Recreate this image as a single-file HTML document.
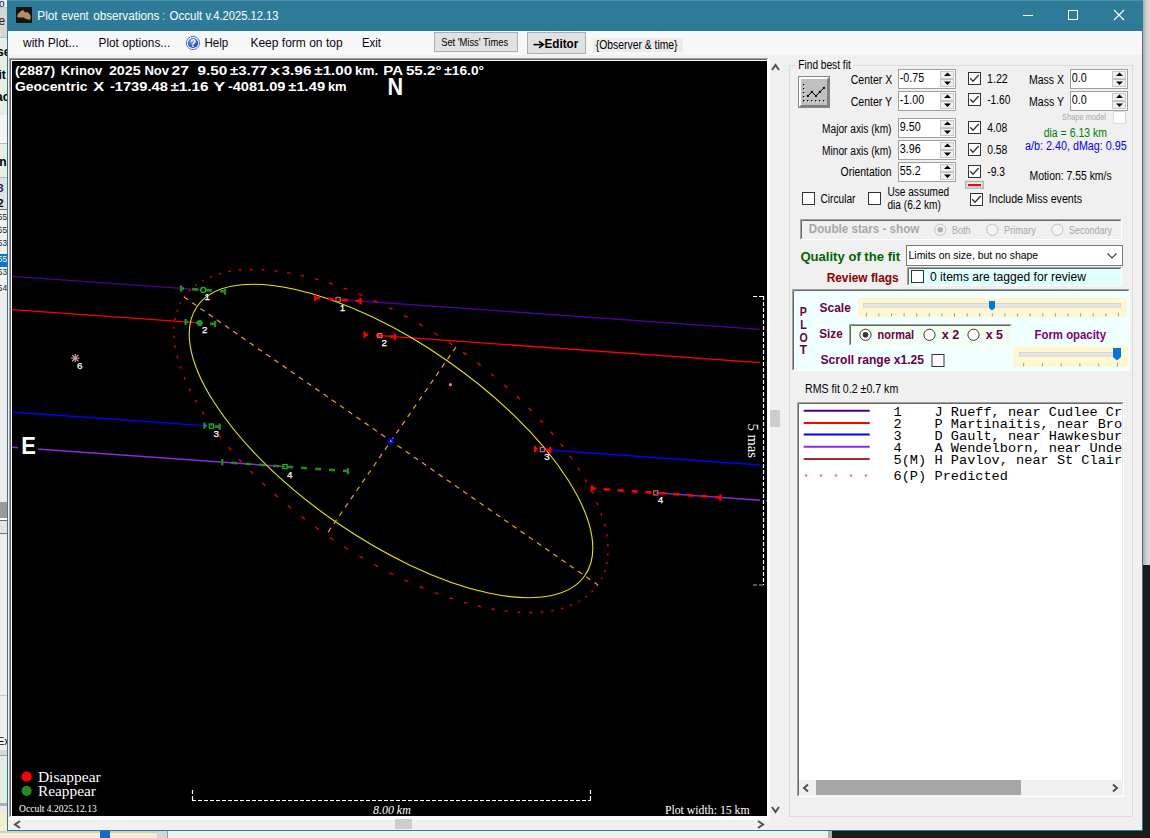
<!DOCTYPE html>
<html><head><meta charset="utf-8"><title>Plot event observations</title>
<style>html,body{margin:0;padding:0;width:1150px;height:838px;overflow:hidden;background:#1a1a1a}</style>
</head><body>
<svg width="1150" height="838" viewBox="0 0 1150 838" style="display:block">
<rect x="0" y="0" width="1150" height="838" fill="#1a1a1a" />
<rect x="0" y="0" width="7" height="831" fill="#e6efe2" />
<rect x="0" y="0" width="7" height="7" fill="#ececec" />
<rect x="0" y="7" width="7" height="1" fill="#c8c8c8" />
<rect x="0" y="8" width="7" height="29" fill="#d6d6d6" />
<rect x="0" y="37" width="7" height="1" fill="#c0c0c0" />
<rect x="0" y="115" width="7" height="28" fill="#f4f4f4" />
<rect x="0" y="143" width="7" height="1" fill="#b8b8b8" />
<rect x="0" y="177" width="7" height="1" fill="#b8b8b8" />
<rect x="0" y="178" width="7" height="31" fill="#e2e2e2" />
<rect x="0" y="209" width="7" height="1" fill="#707070" />
<rect x="0" y="210" width="7" height="83" fill="#f0f0f0" />
<rect x="0" y="254" width="7" height="13" fill="#0a74d0" />
<rect x="0" y="293" width="7" height="209" fill="#ececec" />
<rect x="0" y="502" width="7" height="16" fill="#9a9a9a" />
<rect x="0" y="518" width="7" height="2" fill="#ffffff" />
<rect x="0" y="520" width="7" height="1" fill="#606878" />
<rect x="0" y="521" width="7" height="12" fill="#e4e4e4" />
<rect x="0" y="533" width="7" height="1" fill="#707070" />
<rect x="0" y="534" width="7" height="216" fill="#eeeeee" />
<rect x="0" y="695" width="7" height="1" fill="#c8c8c8" />
<rect x="0" y="750" width="7" height="5" fill="#d8d8d8" />
<rect x="0" y="755" width="7" height="1" fill="#a0a0a0" />
<rect x="0" y="756" width="7" height="47" fill="#e0ece0" />
<rect x="0" y="803" width="7" height="3" fill="#b0b0b0" />
<rect x="0" y="806" width="7" height="6" fill="#e8e8e8" />
<rect x="0" y="812" width="7" height="19" fill="#f3efcc" />
<text x="-1.0" y="7.0" font-family="Liberation Sans" font-size="10" font-weight="normal" font-style="normal" fill="#10204a" >o</text>
<text x="-1.5" y="25.0" font-family="Liberation Sans" font-size="12" font-weight="normal" font-style="normal" fill="#222" >e</text>
<text x="-3.0" y="56.0" font-family="Liberation Sans" font-size="12" font-weight="bold" font-style="normal" fill="#000" >se</text>
<text x="-1.5" y="79.0" font-family="Liberation Sans" font-size="12" font-weight="bold" font-style="normal" fill="#000" >it</text>
<text x="-4.0" y="101.0" font-family="Liberation Sans" font-size="12" font-weight="bold" font-style="normal" fill="#000" >ac</text>
<text x="-4.0" y="166.0" font-family="Liberation Sans" font-size="12" font-weight="bold" font-style="normal" fill="#000" >in</text>
<text x="-2.5" y="191.5" font-family="Liberation Sans" font-size="11" font-weight="bold" font-style="normal" fill="#302060" >3</text>
<text x="-2.5" y="206.5" font-family="Liberation Sans" font-size="11" font-weight="bold" font-style="normal" fill="#000" >2</text>
<text x="-2.2" y="220.0" font-family="Liberation Sans" font-size="9" font-weight="normal" font-style="normal" fill="#222" textLength="9.2" lengthAdjust="spacingAndGlyphs" >55</text>
<text x="-2.2" y="232.5" font-family="Liberation Sans" font-size="9" font-weight="normal" font-style="normal" fill="#222" textLength="9.2" lengthAdjust="spacingAndGlyphs" >55</text>
<text x="-2.2" y="245.8" font-family="Liberation Sans" font-size="9" font-weight="normal" font-style="normal" fill="#222" textLength="9.2" lengthAdjust="spacingAndGlyphs" >53</text>
<text x="-2.2" y="262.0" font-family="Liberation Sans" font-size="9" font-weight="normal" font-style="normal" fill="#ffffff" textLength="9.2" lengthAdjust="spacingAndGlyphs" >55</text>
<text x="-2.2" y="274.7" font-family="Liberation Sans" font-size="9" font-weight="normal" font-style="normal" fill="#222" textLength="9.2" lengthAdjust="spacingAndGlyphs" >53</text>
<text x="-2.2" y="291.2" font-family="Liberation Sans" font-size="9" font-weight="normal" font-style="normal" fill="#222" textLength="9.2" lengthAdjust="spacingAndGlyphs" >54</text>
<text x="-3.0" y="745.0" font-family="Liberation Sans" font-size="11" font-weight="normal" font-style="normal" fill="#000" >Ex</text>
<defs><linearGradient id="rs" x1="0" y1="0" x2="1" y2="0"><stop offset="0" stop-color="#a8a8a8"/><stop offset="0.45" stop-color="#d0d0d0"/><stop offset="1" stop-color="#dadada"/></linearGradient></defs>
<rect x="1143" y="0" width="7" height="565" fill="url(#rs)" />
<rect x="0" y="831" width="832" height="7" fill="#efefef" />
<rect x="0" y="831" width="157" height="7" fill="#f3eecb" />
<rect x="0" y="831" width="157" height="2" fill="#cdcdcd" />
<rect x="100" y="831" width="10" height="7" fill="#1468c8" />
<rect x="157" y="831" width="10" height="7" fill="#d4d4d4" />
<line x1="167.5" y1="831" x2="167.5" y2="838" stroke="#9a9a9a" stroke-width="1"/>
<rect x="828" y="831" width="4" height="7" fill="#b0b0b0" />
<rect x="832" y="831" width="318" height="7" fill="#1a1a1a" />
<rect x="7" y="0" width="1136" height="831" fill="#2e7a99" />
<rect x="8" y="31" width="1134" height="799" fill="#f0f0f0" />
<rect x="7" y="0" width="1136" height="1" fill="#4d8eab" />
<rect x="16" y="7" width="16" height="16" fill="#15130f"/>
<path d="M17.1 16.2 C17.5 14 20 11.5 22.8 10.1 C23.8 10.3 24.5 12.5 25.2 12.6 C26 12.4 26.5 11.8 27.4 12.2 C29.5 13 30.8 15.5 30.7 16.9 C30.8 19 30 20 29.3 19.8 C28 19.7 27 19.2 25.9 19.1 C25 18.5 24.5 17.6 24 17.6 C22 17.5 20 17.8 18.8 17.4 C17.8 17.2 17.1 16.8 17.1 16.2 Z" fill="#b38f64"/>
<text x="37.3" y="19.8" font-family="Liberation Sans" font-size="12.5" font-weight="normal" font-style="normal" fill="#ffffff" textLength="20.3" lengthAdjust="spacingAndGlyphs" >Plot</text>
<text x="61.6" y="19.8" font-family="Liberation Sans" font-size="12.5" font-weight="normal" font-style="normal" fill="#ffffff" textLength="27.1" lengthAdjust="spacingAndGlyphs" >event</text>
<text x="93.2" y="19.8" font-family="Liberation Sans" font-size="12.5" font-weight="normal" font-style="normal" fill="#ffffff" textLength="66.1" lengthAdjust="spacingAndGlyphs" >observations</text>
<text x="162.4" y="19.8" font-family="Liberation Sans" font-size="12.5" font-weight="normal" font-style="normal" fill="#ffffff" textLength="2.0" lengthAdjust="spacingAndGlyphs" >:</text>
<text x="169.6" y="19.8" font-family="Liberation Sans" font-size="12.5" font-weight="normal" font-style="normal" fill="#ffffff" textLength="32.6" lengthAdjust="spacingAndGlyphs" >Occult</text>
<text x="205.4" y="19.8" font-family="Liberation Sans" font-size="12.5" font-weight="normal" font-style="normal" fill="#ffffff" textLength="73.1" lengthAdjust="spacingAndGlyphs" >v.4.2025.12.13</text>
<line x1="1023" y1="15.5" x2="1033" y2="15.5" stroke="#ffffff" stroke-width="1"/>
<rect x="1068.5" y="10.5" width="9" height="9" fill="none" stroke="#ffffff" stroke-width="1"/>
<path d="M1114 10 L1124 20 M1124 10 L1114 20" stroke="#ffffff" stroke-width="1.1"/>
<defs><linearGradient id="mg" x1="0" y1="0" x2="0" y2="1"><stop offset="0" stop-color="#fbfbfb"/><stop offset="0.6" stop-color="#f5f5f5"/><stop offset="1" stop-color="#efefef"/></linearGradient></defs>
<rect x="8" y="31" width="1134" height="24" fill="#f7f7f7" />
<rect x="8" y="31" width="1134" height="1" fill="#fdfdfd" />
<text x="23.0" y="47.0" font-family="Liberation Sans" font-size="12" font-weight="normal" font-style="normal" fill="#0a0620" textLength="55.5" lengthAdjust="spacingAndGlyphs" >with Plot...</text>
<text x="98.5" y="47.0" font-family="Liberation Sans" font-size="12" font-weight="normal" font-style="normal" fill="#0a0620" textLength="71.7" lengthAdjust="spacingAndGlyphs" >Plot options...</text>
<defs><radialGradient id="hg" cx="0.4" cy="0.35" r="0.7"><stop offset="0" stop-color="#8fb8ff"/><stop offset="0.6" stop-color="#2a62d8"/><stop offset="1" stop-color="#1740a0"/></radialGradient></defs>
<circle cx="193" cy="43" r="6.6" fill="#f4f8ff" stroke="#3d6cc8" stroke-width="0.9"/>
<circle cx="193" cy="43" r="5.1" fill="url(#hg)"/>
<text x="189.9" y="47.0" font-family="Liberation Sans" font-size="10" font-weight="bold" font-style="normal" fill="#ffffff" >?</text>
<text x="204.5" y="47.0" font-family="Liberation Sans" font-size="12" font-weight="normal" font-style="normal" fill="#0a0620" textLength="23.8" lengthAdjust="spacingAndGlyphs" >Help</text>
<text x="250.4" y="47.0" font-family="Liberation Sans" font-size="12" font-weight="normal" font-style="normal" fill="#0a0620" textLength="92.2" lengthAdjust="spacingAndGlyphs" >Keep form on top</text>
<text x="362.0" y="47.0" font-family="Liberation Sans" font-size="12" font-weight="normal" font-style="normal" fill="#0a0620" textLength="19.0" lengthAdjust="spacingAndGlyphs" >Exit</text>
<rect x="434.5" y="32.5" width="83" height="19" fill="#e1e1e1" stroke="#adadad"/>
<text x="441.2" y="46.3" font-family="Liberation Sans" font-size="10.5" font-weight="normal" font-style="normal" fill="#000" textLength="66.9" lengthAdjust="spacingAndGlyphs" >Set 'Miss' Times</text>
<rect x="527.5" y="32.5" width="58" height="21" fill="#e1e1e1" stroke="#adadad"/>
<path d="M533.5 44.6 L542 44.6" stroke="#000" stroke-width="1.6"/><path d="M539 41.3 L543.5 44.6 L539 47.9" fill="none" stroke="#000" stroke-width="1.6"/>
<text x="544.5" y="48.0" font-family="Liberation Sans" font-size="13" font-weight="bold" font-style="normal" fill="#000" textLength="33.8" lengthAdjust="spacingAndGlyphs" >Editor</text>
<rect x="593" y="38" width="90" height="14" fill="#ececec" />
<text x="595.8" y="48.7" font-family="Liberation Sans" font-size="12" font-weight="normal" font-style="normal" fill="#000" textLength="81.8" lengthAdjust="spacingAndGlyphs" >{Observer &amp; time}</text>
<rect x="9" y="58" width="761" height="762" fill="#ffffff" />
<rect x="9" y="58" width="759" height="1" fill="#a0a0a0" />
<rect x="9" y="58" width="1" height="759" fill="#a0a0a0" />
<rect x="10" y="59" width="757" height="1" fill="#696969" />
<rect x="10" y="59" width="1" height="757" fill="#696969" />
<rect x="12" y="61" width="755" height="755" fill="#000000" />
<g clip-path="url(#pclip)">
<defs><clipPath id="pclip"><rect x="12" y="61" width="755" height="755"/></clipPath></defs>
<line x1="12.0" y1="276.40" x2="203.0" y2="289.92" stroke="#50009a" stroke-width="1.4" />
<line x1="338.0" y1="299.48" x2="767.0" y2="329.85" stroke="#50009a" stroke-width="1.4" />
<line x1="12.0" y1="309.60" x2="200.0" y2="322.91" stroke="#ff0000" stroke-width="1.4" />
<line x1="380.0" y1="335.65" x2="767.0" y2="363.05" stroke="#ff0000" stroke-width="1.4" />
<line x1="12.0" y1="412.00" x2="211.0" y2="426.09" stroke="#0000ff" stroke-width="1.4" />
<line x1="542.0" y1="449.52" x2="767.0" y2="465.45" stroke="#0000ff" stroke-width="1.4" />
<line x1="12.0" y1="447.30" x2="285.0" y2="466.63" stroke="#8a2be2" stroke-width="1.4" />
<line x1="656.0" y1="492.90" x2="767.0" y2="500.75" stroke="#8a2be2" stroke-width="1.4" />
<ellipse cx="391.0" cy="441.0" rx="236" ry="98" transform="rotate(34.75 391.0 441.0)" fill="none" stroke="#e6e600" stroke-width="1.1"/>
<path d="M598.1 584.6L596.9 586.3M593.0 590.8L591.6 592.3M587.0 596.3L585.3 597.5M580.0 601.0L578.1 602.0M572.1 604.9L570.0 605.7M563.3 608.0L561.0 608.7M553.7 610.3L551.2 610.8M543.3 611.8L540.6 612.0M532.2 612.4L529.3 612.5M520.3 612.3L517.3 612.1M507.8 611.2L504.6 610.9M494.8 609.4L491.5 608.8M481.3 606.7L477.8 605.9M467.3 603.2L463.7 602.3M452.9 599.0L449.3 597.8M438.3 593.9L434.5 592.6M423.4 588.2L419.6 586.6M408.3 581.7L404.5 579.9M393.2 574.5L389.4 572.6M378.0 566.6L374.3 564.6M363.0 558.2L359.2 556.0M348.0 549.2L344.3 546.8M333.3 539.6L329.6 537.2M318.8 529.6L315.3 527.0M304.7 519.1L301.3 516.5M291.1 508.3L287.7 505.5M277.9 497.1L274.6 494.3M265.2 485.7L262.2 482.8M253.2 474.0L250.3 471.1M241.8 462.2L239.1 459.2M231.2 450.3L228.7 447.3M221.3 438.3L219.0 435.3M212.3 426.4L210.2 423.4M204.2 414.5L202.3 411.5M196.9 402.7L195.3 399.8M190.6 391.2L189.2 388.3M185.3 379.8L184.1 377.1M181.0 368.8L180.1 366.1M177.7 358.1L177.0 355.5M175.4 347.9L175.0 345.4M174.2 338.1L174.1 335.7M174.1 328.7L174.2 326.5M175.0 320.0L175.4 317.9M176.9 311.8L177.6 309.8M179.9 304.2L180.8 302.5M183.9 297.4L185.1 295.7M189.0 291.2L190.4 289.7M195.0 285.7L196.7 284.5M202.0 281.0L203.9 280.0M209.9 277.1L212.0 276.3M218.7 274.0L221.0 273.3M228.3 271.7L230.8 271.2M238.7 270.2L241.4 270.0M249.8 269.6L252.7 269.5M261.7 269.7L264.7 269.9M274.2 270.8L277.4 271.1M287.2 272.6L290.5 273.2M300.7 275.3L304.2 276.1M314.7 278.8L318.3 279.7M329.1 283.0L332.7 284.2M343.7 288.1L347.5 289.4M358.6 293.8L362.4 295.4M373.7 300.3L377.5 302.1M388.8 307.5L392.6 309.4M404.0 315.4L407.7 317.4M419.0 323.8L422.8 326.0M434.0 332.8L437.7 335.2M448.7 342.4L452.4 344.8M463.2 352.4L466.7 355.0M477.3 362.9L480.7 365.5M490.9 373.7L494.3 376.5M504.1 384.9L507.4 387.7M516.8 396.3L519.8 399.2M528.8 408.0L531.7 410.9M540.2 419.8L542.9 422.8M550.8 431.7L553.3 434.7M560.7 443.7L563.0 446.7M569.7 455.6L571.8 458.6M577.8 467.5L579.7 470.5M585.1 479.3L586.7 482.2M591.4 490.8L592.8 493.7M596.7 502.2L597.9 504.9M601.0 513.2L601.9 515.9M604.3 523.9L605.0 526.5M606.6 534.1L607.0 536.6M607.8 543.9L607.9 546.3M607.9 553.3L607.8 555.5M607.0 562.0L606.6 564.1M605.1 570.2L604.4 572.2M602.1 577.8L601.2 579.5" stroke="#ee0000" stroke-width="1.35" fill="none"/>
<line x1="184" y1="297" x2="598" y2="585" stroke="#eea000" stroke-width="1.25" stroke-dasharray="5 5"/>
<line x1="456" y1="347" x2="326" y2="535" stroke="#eea000" stroke-width="1.25" stroke-dasharray="5 5"/>
<circle cx="390.8" cy="441" r="3.1" fill="#0000ff"/>
<circle cx="390.8" cy="441.2" r="0.9" fill="#ffa500"/>
<circle cx="450.4" cy="384.7" r="1.6" fill="#ff69b4"/>
<line x1="226.1" y1="291.56" x2="181.0" y2="288.37" stroke="#228b22" stroke-width="2.6" stroke-dasharray="6 8"/>
<rect x="179.9" y="285.3" width="2.3" height="6.3" fill="#228b22"/>
<rect x="223.9" y="288.4" width="2.3" height="6.3" fill="#228b22"/>
<circle cx="203.2" cy="289.9" r="2.5" fill="none" stroke="#00d000" stroke-width="1.3"/>
<text x="204.6" y="299.8" font-family="Liberation Sans" font-size="9.8" fill="#ffffff" stroke="#ffffff" stroke-width="0.25">1</text>
<line x1="216.1" y1="324.05" x2="185.5" y2="321.88" stroke="#228b22" stroke-width="2.6" stroke-dasharray="6 8"/>
<rect x="184.4" y="318.8" width="2.3" height="6.3" fill="#228b22"/>
<rect x="213.9" y="320.9" width="2.3" height="6.3" fill="#228b22"/>
<circle cx="199.7" cy="322.9" r="3.0" fill="#1fa01f"/>
<text x="202.0" y="333.0" font-family="Liberation Sans" font-size="9.8" fill="#ffffff" stroke="#ffffff" stroke-width="0.25">2</text>
<line x1="220.7" y1="426.78" x2="204.3" y2="425.61" stroke="#228b22" stroke-width="2.6" stroke-dasharray="6 8"/>
<rect x="203.2" y="422.5" width="2.3" height="6.3" fill="#228b22"/>
<rect x="218.5" y="423.6" width="2.3" height="6.3" fill="#228b22"/>
<rect x="209.3" y="424.0" width="4.2" height="4.2" fill="none" stroke="#00d000" stroke-width="1.15"/>
<text x="213.4" y="437.2" font-family="Liberation Sans" font-size="9.8" fill="#ffffff" stroke="#ffffff" stroke-width="0.25">3</text>
<line x1="349.0" y1="471.16" x2="222.2" y2="462.18" stroke="#228b22" stroke-width="2.6" stroke-dasharray="6 8"/>
<rect x="221.1" y="459.1" width="2.3" height="6.3" fill="#228b22"/>
<rect x="346.8" y="468.0" width="2.3" height="6.3" fill="#228b22"/>
<rect x="282.9" y="464.5" width="4.2" height="4.2" fill="none" stroke="#00d000" stroke-width="1.15"/>
<text x="287.0" y="477.5" font-family="Liberation Sans" font-size="9.8" fill="#ffffff" stroke="#ffffff" stroke-width="0.25">4</text>
<line x1="361.6" y1="301.15" x2="315.1" y2="297.86" stroke="#ff0000" stroke-width="2.6" stroke-dasharray="6 8"/>
<rect x="314.0" y="294.8" width="2.3" height="6.3" fill="#ff0000"/>
<rect x="359.4" y="298.0" width="2.3" height="6.3" fill="#ff0000"/>
<rect x="336.0" y="297.4" width="4.2" height="4.2" fill="none" stroke="#d86a55" stroke-width="1.15"/>
<text x="339.8" y="310.5" font-family="Liberation Sans" font-size="9.8" fill="#ffffff" stroke="#ffffff" stroke-width="0.25">1</text>
<line x1="395.9" y1="336.78" x2="364.5" y2="334.56" stroke="#ff0000" stroke-width="2.6" stroke-dasharray="6 8"/>
<rect x="363.4" y="331.5" width="2.3" height="6.3" fill="#ff0000"/>
<rect x="393.7" y="333.6" width="2.3" height="6.3" fill="#ff0000"/>
<rect x="377.7" y="333.5" width="4.2" height="4.2" fill="none" stroke="#d86a55" stroke-width="1.15"/>
<text x="381.6" y="346.0" font-family="Liberation Sans" font-size="9.8" fill="#ffffff" stroke="#ffffff" stroke-width="0.25">2</text>
<line x1="551.3" y1="450.18" x2="535.0" y2="449.03" stroke="#ff0000" stroke-width="2.6" stroke-dasharray="6 8"/>
<rect x="533.9" y="445.9" width="2.3" height="6.3" fill="#ff0000"/>
<rect x="549.1" y="447.0" width="2.3" height="6.3" fill="#ff0000"/>
<rect x="540.3" y="447.5" width="4.2" height="4.2" fill="none" stroke="#d86a55" stroke-width="1.15"/>
<text x="544.2" y="460.0" font-family="Liberation Sans" font-size="9.8" fill="#ffffff" stroke="#ffffff" stroke-width="0.25">3</text>
<line x1="721.4" y1="497.53" x2="591.7" y2="488.34" stroke="#ff0000" stroke-width="2.6" stroke-dasharray="6 8"/>
<rect x="590.6" y="485.2" width="2.3" height="6.3" fill="#ff0000"/>
<rect x="719.2" y="494.3" width="2.3" height="6.3" fill="#ff0000"/>
<rect x="653.7" y="490.8" width="4.2" height="4.2" fill="none" stroke="#d86a55" stroke-width="1.15"/>
<text x="657.8" y="503.0" font-family="Liberation Sans" font-size="9.8" fill="#ffffff" stroke="#ffffff" stroke-width="0.25">4</text>
<g stroke="#b8b8b8" stroke-width="1.1"><line x1="71" y1="358.1" x2="79.5" y2="358.1"/><line x1="75.2" y1="354" x2="75.2" y2="362.3"/><line x1="72" y1="354.9" x2="78.4" y2="361.3"/><line x1="72" y1="361.3" x2="78.4" y2="354.9"/></g>
<circle cx="75.2" cy="358.1" r="1.8" fill="#ff69b4"/>
<text x="77.0" y="369.0" font-family="Liberation Sans" font-size="9.8" fill="#ffffff" stroke="#ffffff" stroke-width="0.25">6</text>
<rect x="760" y="290" width="6" height="300" fill="#000000" />
<line x1="763.5" y1="296" x2="763.5" y2="585" stroke="#ffffff" stroke-width="1.2" stroke-dasharray="4 2"/>
<line x1="753" y1="296.5" x2="764" y2="296.5" stroke="#ffffff" stroke-width="1.2" stroke-dasharray="4 2"/>
<line x1="753" y1="585" x2="764" y2="585" stroke="#aaaaaa" stroke-width="1.2" stroke-dasharray="4 2"/>
<text x="0" y="0" font-family="Liberation Serif" font-size="14.6" fill="#ffffff" textLength="34.4" lengthAdjust="spacingAndGlyphs" transform="translate(747.8 423.6) rotate(90)">5 mas</text>
<line x1="192" y1="800.5" x2="591" y2="800.5" stroke="#ffffff" stroke-width="1.2" stroke-dasharray="4 2"/>
<line x1="192.5" y1="790" x2="192.5" y2="801" stroke="#ffffff" stroke-width="1.2" stroke-dasharray="4 2"/>
<line x1="590.5" y1="790" x2="590.5" y2="801" stroke="#ffffff" stroke-width="1.2" stroke-dasharray="4 2"/>
<text x="373.0" y="813.7" font-family="Liberation Serif" font-size="12" font-weight="normal" font-style="italic" fill="#ffffff" textLength="37.8" lengthAdjust="spacingAndGlyphs" >8.00 km</text>
<text x="664.9" y="813.7" font-family="Liberation Serif" font-size="12.5" font-weight="normal" font-style="normal" fill="#ffffff" textLength="84.8" lengthAdjust="spacingAndGlyphs" >Plot width: 15 km</text>
<circle cx="26.6" cy="776.7" r="5.1" fill="#ff0000"/>
<circle cx="26.6" cy="790.8" r="5.1" fill="#228b22"/>
<text x="37.9" y="781.9" font-family="Liberation Serif" font-size="15.5" font-weight="normal" font-style="normal" fill="#ffffff" textLength="62.8" lengthAdjust="spacingAndGlyphs" >Disappear</text>
<text x="37.9" y="795.5" font-family="Liberation Serif" font-size="15.5" font-weight="normal" font-style="normal" fill="#ffffff" textLength="58.1" lengthAdjust="spacingAndGlyphs" >Reappear</text>
<text x="19.1" y="811.7" font-family="Liberation Serif" font-size="10.5" font-weight="normal" font-style="normal" fill="#ffffff" textLength="77.6" lengthAdjust="spacingAndGlyphs" >Occult 4.2025.12.13</text>
<text x="14.9" y="74.7" font-family="Liberation Sans" font-size="13.5" font-weight="bold" font-style="normal" fill="#ffffff" textLength="40.3" lengthAdjust="spacingAndGlyphs" >(2887)</text>
<text x="60.8" y="74.7" font-family="Liberation Sans" font-size="13.5" font-weight="bold" font-style="normal" fill="#ffffff" textLength="41.4" lengthAdjust="spacingAndGlyphs" >Krinov</text>
<text x="108.9" y="74.7" font-family="Liberation Sans" font-size="13.5" font-weight="bold" font-style="normal" fill="#ffffff" textLength="31.9" lengthAdjust="spacingAndGlyphs" >2025</text>
<text x="144.4" y="74.7" font-family="Liberation Sans" font-size="13.5" font-weight="bold" font-style="normal" fill="#ffffff" textLength="24.6" lengthAdjust="spacingAndGlyphs" >Nov</text>
<text x="171.5" y="74.7" font-family="Liberation Sans" font-size="13.5" font-weight="bold" font-style="normal" fill="#ffffff" textLength="17.3" lengthAdjust="spacingAndGlyphs" >27</text>
<text x="197.6" y="74.7" font-family="Liberation Sans" font-size="13.5" font-weight="bold" font-style="normal" fill="#ffffff" textLength="29.8" lengthAdjust="spacingAndGlyphs" >9.50</text>
<text x="229.9" y="74.7" font-family="Liberation Sans" font-size="13.5" font-weight="bold" font-style="normal" fill="#ffffff" textLength="37.5" lengthAdjust="spacingAndGlyphs" >±3.77</text>
<text x="270.2" y="74.7" font-family="Liberation Sans" font-size="13.5" font-weight="bold" font-style="normal" fill="#ffffff" textLength="9.7" lengthAdjust="spacingAndGlyphs" >x</text>
<text x="281.5" y="74.7" font-family="Liberation Sans" font-size="13.5" font-weight="bold" font-style="normal" fill="#ffffff" textLength="30.0" lengthAdjust="spacingAndGlyphs" >3.96</text>
<text x="314.3" y="74.7" font-family="Liberation Sans" font-size="13.5" font-weight="bold" font-style="normal" fill="#ffffff" textLength="37.9" lengthAdjust="spacingAndGlyphs" >±1.00</text>
<text x="355.0" y="74.7" font-family="Liberation Sans" font-size="13.5" font-weight="bold" font-style="normal" fill="#ffffff" textLength="23.2" lengthAdjust="spacingAndGlyphs" >km.</text>
<text x="383.3" y="74.7" font-family="Liberation Sans" font-size="13.5" font-weight="bold" font-style="normal" fill="#ffffff" textLength="19.8" lengthAdjust="spacingAndGlyphs" >PA</text>
<text x="405.9" y="74.7" font-family="Liberation Sans" font-size="13.5" font-weight="bold" font-style="normal" fill="#ffffff" textLength="35.6" lengthAdjust="spacingAndGlyphs" >55.2°</text>
<text x="444.3" y="74.7" font-family="Liberation Sans" font-size="13.5" font-weight="bold" font-style="normal" fill="#ffffff" textLength="39.7" lengthAdjust="spacingAndGlyphs" >±16.0°</text>
<text x="14.9" y="90.8" font-family="Liberation Sans" font-size="13.5" font-weight="bold" font-style="normal" fill="#ffffff" textLength="72.6" lengthAdjust="spacingAndGlyphs" >Geocentric</text>
<text x="93.2" y="90.8" font-family="Liberation Sans" font-size="13.5" font-weight="bold" font-style="normal" fill="#ffffff" textLength="11.0" lengthAdjust="spacingAndGlyphs" >X</text>
<text x="109.9" y="90.8" font-family="Liberation Sans" font-size="13.5" font-weight="bold" font-style="normal" fill="#ffffff" textLength="58.0" lengthAdjust="spacingAndGlyphs" >-1739.48</text>
<text x="170.4" y="90.8" font-family="Liberation Sans" font-size="13.5" font-weight="bold" font-style="normal" fill="#ffffff" textLength="38.2" lengthAdjust="spacingAndGlyphs" >±1.16</text>
<text x="213.2" y="90.8" font-family="Liberation Sans" font-size="13.5" font-weight="bold" font-style="normal" fill="#ffffff" textLength="12.1" lengthAdjust="spacingAndGlyphs" >Y</text>
<text x="227.9" y="90.8" font-family="Liberation Sans" font-size="13.5" font-weight="bold" font-style="normal" fill="#ffffff" textLength="57.6" lengthAdjust="spacingAndGlyphs" >-4081.09</text>
<text x="288.3" y="90.8" font-family="Liberation Sans" font-size="13.5" font-weight="bold" font-style="normal" fill="#ffffff" textLength="36.8" lengthAdjust="spacingAndGlyphs" >±1.49</text>
<text x="327.9" y="90.8" font-family="Liberation Sans" font-size="13.5" font-weight="bold" font-style="normal" fill="#ffffff" textLength="18.7" lengthAdjust="spacingAndGlyphs" >km</text>
<text x="387.4" y="94.9" font-family="Liberation Sans" font-size="23.7" font-weight="bold" font-style="normal" fill="#ffffff" textLength="15.6" lengthAdjust="spacingAndGlyphs" >N</text>
<rect x="18" y="434" width="20" height="22" fill="#000000" />
<text x="21.3" y="453.7" font-family="Liberation Sans" font-size="23.3" font-weight="bold" font-style="normal" fill="#ffffff" textLength="14.7" lengthAdjust="spacingAndGlyphs" >E</text>
</g>
<rect x="770" y="410" width="10" height="17" fill="#cdcdcd" />
<rect x="395" y="819" width="17" height="10" fill="#cdcdcd" />
<path d="M772 70 L775.5 65 L779 70" stroke="#505050" stroke-width="2" fill="none"/>
<path d="M772 807 L775.5 812 L779 807" stroke="#505050" stroke-width="2" fill="none"/>
<path d="M20 821 L15 824.5 L20 828" stroke="#505050" stroke-width="2" fill="none"/>
<path d="M758 821 L763 824.5 L758 828" stroke="#505050" stroke-width="2" fill="none"/>
<rect x="789.5" y="65.5" width="343" height="751" fill="none" stroke="#dcdcdc" stroke-width="1"/>
<rect x="796" y="60" width="58" height="10" fill="#f0f0f0" />
<text x="798.3" y="68.8" font-family="Liberation Sans" font-size="12" font-weight="normal" font-style="normal" fill="#000" textLength="52.4" lengthAdjust="spacingAndGlyphs" >Find best fit</text>
<rect x="798" y="76" width="32" height="32" fill="#858585" />
<rect x="799" y="77" width="30" height="30" fill="#ffffff" />
<path d="M829 77 L829 107 L799 107 L801 105 L827 105 L827 79 Z" fill="#808080"/>
<rect x="801" y="79" width="26" height="26" fill="#c0c0c0" />
<rect x="804.0" y="85.0" width="1.2" height="1.2" fill="#ffffff"/>
<rect x="803.0" y="84.0" width="1.3" height="1.3" fill="#000"/>
<rect x="804.0" y="89.0" width="1.2" height="1.2" fill="#ffffff"/>
<rect x="803.0" y="88.0" width="1.3" height="1.3" fill="#000"/>
<rect x="804.0" y="93.0" width="1.2" height="1.2" fill="#ffffff"/>
<rect x="803.0" y="92.0" width="1.3" height="1.3" fill="#000"/>
<rect x="804.0" y="97.0" width="1.2" height="1.2" fill="#ffffff"/>
<rect x="803.0" y="96.0" width="1.3" height="1.3" fill="#000"/>
<rect x="804.0" y="101.0" width="1.2" height="1.2" fill="#ffffff"/>
<rect x="803.0" y="100.0" width="1.3" height="1.3" fill="#000"/>
<rect x="804.0" y="101.0" width="1.2" height="1.2" fill="#ffffff"/>
<rect x="803.0" y="100.0" width="1.3" height="1.3" fill="#000"/>
<rect x="808.0" y="101.0" width="1.2" height="1.2" fill="#ffffff"/>
<rect x="807.0" y="100.0" width="1.3" height="1.3" fill="#000"/>
<rect x="812.0" y="101.0" width="1.2" height="1.2" fill="#ffffff"/>
<rect x="811.0" y="100.0" width="1.3" height="1.3" fill="#000"/>
<rect x="816.0" y="101.0" width="1.2" height="1.2" fill="#ffffff"/>
<rect x="815.0" y="100.0" width="1.3" height="1.3" fill="#000"/>
<rect x="820.0" y="101.0" width="1.2" height="1.2" fill="#ffffff"/>
<rect x="819.0" y="100.0" width="1.3" height="1.3" fill="#000"/>
<rect x="824.0" y="101.0" width="1.2" height="1.2" fill="#ffffff"/>
<rect x="823.0" y="100.0" width="1.3" height="1.3" fill="#000"/>
<polyline points="807.9,95.9 811.9,91.9 815.9,95.9 819.9,91.9 823.9,87.9" fill="none" stroke="#000" stroke-width="1"/>
<rect x="806.9" y="94.9" width="2" height="2" fill="#000"/>
<rect x="810.9" y="90.9" width="2" height="2" fill="#000"/>
<rect x="814.9" y="94.9" width="2" height="2" fill="#000"/>
<rect x="818.9" y="90.9" width="2" height="2" fill="#000"/>
<rect x="822.9" y="86.9" width="2" height="2" fill="#000"/>
<rect x="898.5" y="69.5" width="57" height="19" fill="#ffffff" stroke="#a0a0a0"/>
<rect x="940.5" y="71.5" width="13" height="15" fill="#f0f0f0" stroke="#c8c8c8"/>
<rect x="941" y="78.5" width="12" height="1.2" fill="#a8a8a8" />
<path d="M944 76.0 L947.5 72.5 L951 76.0 Z" fill="#000"/>
<path d="M944 81.5 L947.5 85.0 L951 81.5 Z" fill="#000"/>
<text x="899.8" y="82.0" font-family="Liberation Sans" font-size="12.5" font-weight="normal" font-style="normal" fill="#000" textLength="24.3" lengthAdjust="spacingAndGlyphs" >-0.75</text>
<rect x="898.5" y="91.5" width="57" height="19" fill="#ffffff" stroke="#a0a0a0"/>
<rect x="940.5" y="93.5" width="13" height="15" fill="#f0f0f0" stroke="#c8c8c8"/>
<rect x="941" y="100.5" width="12" height="1.2" fill="#a8a8a8" />
<path d="M944 98.0 L947.5 94.5 L951 98.0 Z" fill="#000"/>
<path d="M944 103.5 L947.5 107.0 L951 103.5 Z" fill="#000"/>
<text x="899.8" y="104.0" font-family="Liberation Sans" font-size="12.5" font-weight="normal" font-style="normal" fill="#000" textLength="24.3" lengthAdjust="spacingAndGlyphs" >-1.00</text>
<rect x="898.5" y="118.5" width="57" height="19" fill="#ffffff" stroke="#a0a0a0"/>
<rect x="940.5" y="120.5" width="13" height="15" fill="#f0f0f0" stroke="#c8c8c8"/>
<rect x="941" y="127.5" width="12" height="1.2" fill="#a8a8a8" />
<path d="M944 125.0 L947.5 121.5 L951 125.0 Z" fill="#000"/>
<path d="M944 130.5 L947.5 134.0 L951 130.5 Z" fill="#000"/>
<text x="899.8" y="131.0" font-family="Liberation Sans" font-size="12.5" font-weight="normal" font-style="normal" fill="#000" textLength="21.0" lengthAdjust="spacingAndGlyphs" >9.50</text>
<rect x="898.5" y="140.5" width="57" height="19" fill="#ffffff" stroke="#a0a0a0"/>
<rect x="940.5" y="142.5" width="13" height="15" fill="#f0f0f0" stroke="#c8c8c8"/>
<rect x="941" y="149.5" width="12" height="1.2" fill="#a8a8a8" />
<path d="M944 147.0 L947.5 143.5 L951 147.0 Z" fill="#000"/>
<path d="M944 152.5 L947.5 156.0 L951 152.5 Z" fill="#000"/>
<text x="899.8" y="153.0" font-family="Liberation Sans" font-size="12.5" font-weight="normal" font-style="normal" fill="#000" textLength="21.0" lengthAdjust="spacingAndGlyphs" >3.96</text>
<rect x="898.5" y="162.5" width="57" height="19" fill="#ffffff" stroke="#a0a0a0"/>
<rect x="940.5" y="164.5" width="13" height="15" fill="#f0f0f0" stroke="#c8c8c8"/>
<rect x="941" y="171.5" width="12" height="1.2" fill="#a8a8a8" />
<path d="M944 169.0 L947.5 165.5 L951 169.0 Z" fill="#000"/>
<path d="M944 174.5 L947.5 178.0 L951 174.5 Z" fill="#000"/>
<text x="899.8" y="175.0" font-family="Liberation Sans" font-size="12.5" font-weight="normal" font-style="normal" fill="#000" textLength="21.0" lengthAdjust="spacingAndGlyphs" >55.2</text>
<rect x="1070.5" y="69.5" width="57" height="19" fill="#ffffff" stroke="#a0a0a0"/>
<rect x="1112.5" y="71.5" width="13" height="15" fill="#f0f0f0" stroke="#c8c8c8"/>
<rect x="1113" y="78.5" width="12" height="1.2" fill="#a8a8a8" />
<path d="M1116 76.0 L1119.5 72.5 L1123 76.0 Z" fill="#000"/>
<path d="M1116 81.5 L1119.5 85.0 L1123 81.5 Z" fill="#000"/>
<text x="1071.8" y="82.0" font-family="Liberation Sans" font-size="12.5" font-weight="normal" font-style="normal" fill="#000" textLength="15.0" lengthAdjust="spacingAndGlyphs" >0.0</text>
<rect x="1070.5" y="91.5" width="57" height="19" fill="#ffffff" stroke="#a0a0a0"/>
<rect x="1112.5" y="93.5" width="13" height="15" fill="#f0f0f0" stroke="#c8c8c8"/>
<rect x="1113" y="100.5" width="12" height="1.2" fill="#a8a8a8" />
<path d="M1116 98.0 L1119.5 94.5 L1123 98.0 Z" fill="#000"/>
<path d="M1116 103.5 L1119.5 107.0 L1123 103.5 Z" fill="#000"/>
<text x="1071.8" y="104.0" font-family="Liberation Sans" font-size="12.5" font-weight="normal" font-style="normal" fill="#000" textLength="15.0" lengthAdjust="spacingAndGlyphs" >0.0</text>
<text x="850.7" y="84.0" font-family="Liberation Sans" font-size="12" font-weight="normal" font-style="normal" fill="#000" textLength="41.5" lengthAdjust="spacingAndGlyphs" >Center X</text>
<text x="850.7" y="105.9" font-family="Liberation Sans" font-size="12" font-weight="normal" font-style="normal" fill="#000" textLength="41.3" lengthAdjust="spacingAndGlyphs" >Center Y</text>
<text x="822.0" y="133.0" font-family="Liberation Sans" font-size="12" font-weight="normal" font-style="normal" fill="#000" textLength="69.5" lengthAdjust="spacingAndGlyphs" >Major axis (km)</text>
<text x="822.0" y="154.5" font-family="Liberation Sans" font-size="12" font-weight="normal" font-style="normal" fill="#000" textLength="69.5" lengthAdjust="spacingAndGlyphs" >Minor axis (km)</text>
<text x="840.6" y="175.5" font-family="Liberation Sans" font-size="12" font-weight="normal" font-style="normal" fill="#000" textLength="50.9" lengthAdjust="spacingAndGlyphs" >Orientation</text>
<rect x="968.5" y="72.5" width="12" height="12" fill="#ffffff" stroke="#333333"/>
<path d="M970.2 78.2 L973 81.2 L978.7 75" fill="none" stroke="#333333" stroke-width="1.3"/>
<text x="987.0" y="82.5" font-family="Liberation Sans" font-size="12" font-weight="normal" font-style="normal" fill="#000" textLength="20.8" lengthAdjust="spacingAndGlyphs" >1.22</text>
<rect x="968.5" y="93.5" width="12" height="12" fill="#ffffff" stroke="#333333"/>
<path d="M970.2 99.2 L973 102.2 L978.7 96" fill="none" stroke="#333333" stroke-width="1.3"/>
<text x="987.2" y="104.2" font-family="Liberation Sans" font-size="12" font-weight="normal" font-style="normal" fill="#000" textLength="23.3" lengthAdjust="spacingAndGlyphs" >-1.60</text>
<rect x="968.5" y="121.5" width="12" height="12" fill="#ffffff" stroke="#333333"/>
<path d="M970.2 127.2 L973 130.2 L978.7 124" fill="none" stroke="#333333" stroke-width="1.3"/>
<text x="987.2" y="132.2" font-family="Liberation Sans" font-size="12" font-weight="normal" font-style="normal" fill="#000" textLength="20.1" lengthAdjust="spacingAndGlyphs" >4.08</text>
<rect x="968.5" y="143.5" width="12" height="12" fill="#ffffff" stroke="#333333"/>
<path d="M970.2 149.2 L973 152.2 L978.7 146" fill="none" stroke="#333333" stroke-width="1.3"/>
<text x="987.2" y="153.8" font-family="Liberation Sans" font-size="12" font-weight="normal" font-style="normal" fill="#000" textLength="20.1" lengthAdjust="spacingAndGlyphs" >0.58</text>
<rect x="968.5" y="165.5" width="12" height="12" fill="#ffffff" stroke="#333333"/>
<path d="M970.2 171.2 L973 174.2 L978.7 168" fill="none" stroke="#333333" stroke-width="1.3"/>
<text x="987.2" y="175.5" font-family="Liberation Sans" font-size="12" font-weight="normal" font-style="normal" fill="#000" textLength="17.8" lengthAdjust="spacingAndGlyphs" >-9.3</text>
<rect x="965.7" y="181.5" width="17.6" height="6.6" fill="#e0f0f0" stroke="#b0b0b0" stroke-width="1.3"/>
<rect x="968" y="184" width="13" height="2.2" fill="#ff0000" />
<text x="1029.0" y="84.1" font-family="Liberation Sans" font-size="12" font-weight="normal" font-style="normal" fill="#000" textLength="35.0" lengthAdjust="spacingAndGlyphs" >Mass X</text>
<text x="1029.0" y="105.5" font-family="Liberation Sans" font-size="12" font-weight="normal" font-style="normal" fill="#000" textLength="35.0" lengthAdjust="spacingAndGlyphs" >Mass Y</text>
<text x="1062.0" y="119.8" font-family="Liberation Sans" font-size="8.5" font-weight="normal" font-style="normal" fill="#a8a8a8" textLength="44.0" lengthAdjust="spacingAndGlyphs" >Shape model</text>
<rect x="1113.5" y="111.5" width="12" height="12" fill="#ffffff" stroke="#dcdcdc"/>
<text x="1043.7" y="136.6" font-family="Liberation Sans" font-size="12" font-weight="normal" font-style="normal" fill="#008000" textLength="63.3" lengthAdjust="spacingAndGlyphs" >dia = 6.13 km</text>
<text x="1025.0" y="149.5" font-family="Liberation Sans" font-size="12" font-weight="normal" font-style="normal" fill="#0000ff" textLength="101.8" lengthAdjust="spacingAndGlyphs" >a/b: 2.40, dMag: 0.95</text>
<text x="1029.5" y="179.5" font-family="Liberation Sans" font-size="12" font-weight="normal" font-style="normal" fill="#000" textLength="82.1" lengthAdjust="spacingAndGlyphs" >Motion: 7.55 km/s</text>
<rect x="802.5" y="192.5" width="12" height="12" fill="#ffffff" stroke="#333333"/>
<text x="820.5" y="202.6" font-family="Liberation Sans" font-size="12" font-weight="normal" font-style="normal" fill="#000" textLength="34.9" lengthAdjust="spacingAndGlyphs" >Circular</text>
<rect x="868.5" y="192.5" width="12" height="12" fill="#ffffff" stroke="#333333"/>
<text x="887.5" y="195.8" font-family="Liberation Sans" font-size="12" font-weight="normal" font-style="normal" fill="#000" textLength="61.7" lengthAdjust="spacingAndGlyphs" >Use assumed</text>
<text x="887.5" y="209.0" font-family="Liberation Sans" font-size="12" font-weight="normal" font-style="normal" fill="#000" textLength="53.4" lengthAdjust="spacingAndGlyphs" >dia (6.2 km)</text>
<rect x="970.5" y="193.5" width="12" height="12" fill="#ffffff" stroke="#333333"/>
<path d="M972.2 199.2 L975 202.2 L980.7 196" fill="none" stroke="#333333" stroke-width="1.3"/>
<text x="988.8" y="202.6" font-family="Liberation Sans" font-size="12" font-weight="normal" font-style="normal" fill="#000" textLength="93.2" lengthAdjust="spacingAndGlyphs" >Include Miss events</text>
<rect x="800" y="219" width="322" height="21" fill="#f0f0f0" />
<path d="M800.5 239.5 L800.5 219.5 L1121.5 219.5" fill="none" stroke="#a0a0a0" stroke-width="1"/>
<path d="M801.5 238.5 L801.5 220.5 L1120.5 220.5" fill="none" stroke="#696969" stroke-width="1"/>
<path d="M800.5 239.5 L1121.5 239.5 L1121.5 219.5" fill="none" stroke="#ffffff" stroke-width="1"/>
<text x="808.8" y="233.0" font-family="Liberation Sans" font-size="12" font-weight="bold" font-style="normal" fill="#a8a8a8" textLength="110.5" lengthAdjust="spacingAndGlyphs" >Double stars - show</text>
<circle cx="940.3" cy="229.8" r="5.6" fill="#f4f4f4" stroke="#c0c0c0" stroke-width="1"/>
<circle cx="940.3" cy="229.8" r="2.8" fill="#b0b0b0"/>
<text x="952.0" y="234.2" font-family="Liberation Sans" font-size="10" font-weight="normal" font-style="normal" fill="#a8a8a8" textLength="18.5" lengthAdjust="spacingAndGlyphs" >Both</text>
<circle cx="992.3" cy="229.8" r="5.6" fill="#f4f4f4" stroke="#c0c0c0" stroke-width="1"/>
<text x="1004.0" y="234.2" font-family="Liberation Sans" font-size="10" font-weight="normal" font-style="normal" fill="#a8a8a8" textLength="32.0" lengthAdjust="spacingAndGlyphs" >Primary</text>
<circle cx="1057.3" cy="229.8" r="5.6" fill="#f4f4f4" stroke="#c0c0c0" stroke-width="1"/>
<text x="1069.0" y="234.2" font-family="Liberation Sans" font-size="10" font-weight="normal" font-style="normal" fill="#a8a8a8" textLength="43.0" lengthAdjust="spacingAndGlyphs" >Secondary</text>
<text x="800.4" y="261.0" font-family="Liberation Sans" font-size="12.5" font-weight="bold" font-style="normal" fill="#006400" textLength="99.6" lengthAdjust="spacingAndGlyphs" >Quality of the fit</text>
<rect x="906.5" y="245.5" width="216" height="20" fill="#ffffff" stroke="#7a7a7a"/>
<text x="908.5" y="258.5" font-family="Liberation Sans" font-size="11.5" font-weight="normal" font-style="normal" fill="#000" textLength="129.7" lengthAdjust="spacingAndGlyphs" >Limits on size, but no shape</text>
<path d="M1107.5 253.5 L1112 258 L1116.5 253.5" fill="none" stroke="#333" stroke-width="1.1"/>
<text x="826.7" y="281.6" font-family="Liberation Sans" font-size="12.5" font-weight="bold" font-style="normal" fill="#8b0000" textLength="71.9" lengthAdjust="spacingAndGlyphs" >Review flags</text>
<rect x="907" y="267" width="215" height="19" fill="#e0ffff" />
<path d="M907.5 285.5 L907.5 267.5 L1121.5 267.5" fill="none" stroke="#a0a0a0"/>
<path d="M908.5 284.5 L908.5 268.5 L1120.5 268.5" fill="none" stroke="#696969"/>
<path d="M907.5 285.5 L1121.5 285.5 L1121.5 267.5" fill="none" stroke="#ffffff"/>
<rect x="911.5" y="270.5" width="12" height="12" fill="#ffffff" stroke="#333333"/>
<text x="930.0" y="281.0" font-family="Liberation Sans" font-size="12.5" font-weight="normal" font-style="normal" fill="#000" textLength="156.0" lengthAdjust="spacingAndGlyphs" >0 items are tagged for review</text>
<rect x="792" y="289" width="338" height="82" fill="#f0ffff" />
<path d="M792.5 370.5 L792.5 289.5 L1129.5 289.5" fill="none" stroke="#a0a0a0"/>
<path d="M793.5 369.5 L793.5 290.5 L1128.5 290.5" fill="none" stroke="#696969"/>
<path d="M792.5 370.5 L1129.5 370.5 L1129.5 289.5" fill="none" stroke="#ffffff"/>
<text x="799.8" y="315.9" font-family="Liberation Sans" font-size="12" font-weight="bold" font-style="normal" fill="#6a0048" textLength="7.1" lengthAdjust="spacingAndGlyphs" >P</text>
<text x="800.3" y="328.7" font-family="Liberation Sans" font-size="12" font-weight="bold" font-style="normal" fill="#6a0048" textLength="6.5" lengthAdjust="spacingAndGlyphs" >L</text>
<text x="799.4" y="341.6" font-family="Liberation Sans" font-size="12" font-weight="bold" font-style="normal" fill="#6a0048" textLength="8.2" lengthAdjust="spacingAndGlyphs" >O</text>
<text x="799.8" y="354.4" font-family="Liberation Sans" font-size="12" font-weight="bold" font-style="normal" fill="#6a0048" textLength="7.2" lengthAdjust="spacingAndGlyphs" >T</text>
<text x="819.5" y="311.7" font-family="Liberation Sans" font-size="12" font-weight="bold" font-style="normal" fill="#6a0048" textLength="31.3" lengthAdjust="spacingAndGlyphs" >Scale</text>
<text x="819.3" y="338.0" font-family="Liberation Sans" font-size="12" font-weight="bold" font-style="normal" fill="#6a0048" textLength="23.4" lengthAdjust="spacingAndGlyphs" >Size</text>
<text x="820.5" y="364.4" font-family="Liberation Sans" font-size="12" font-weight="bold" font-style="normal" fill="#6a0048" textLength="103.5" lengthAdjust="spacingAndGlyphs" >Scroll range x1.25</text>
<rect x="932.0" y="354.5" width="12" height="12" fill="#ffffff" stroke="#333333"/>
<rect x="858" y="298" width="269" height="19" fill="#fdf8d2" />
<rect x="863.5" y="303.5" width="257" height="3.5" fill="#e6e6e6" stroke="#d4d4d4" stroke-width="1"/>
<rect x="865.8" y="312.8" width="1" height="3.7" fill="#9a9a9a"/>
<rect x="878.4" y="313.3" width="1" height="3.2" fill="#9a9a9a"/>
<rect x="891.0" y="313.3" width="1" height="3.2" fill="#9a9a9a"/>
<rect x="903.6" y="313.3" width="1" height="3.2" fill="#9a9a9a"/>
<rect x="916.2" y="313.3" width="1" height="3.2" fill="#9a9a9a"/>
<rect x="928.8" y="313.3" width="1" height="3.2" fill="#9a9a9a"/>
<rect x="941.4" y="313.3" width="1" height="3.2" fill="#9a9a9a"/>
<rect x="954.0" y="313.3" width="1" height="3.2" fill="#9a9a9a"/>
<rect x="966.6" y="313.3" width="1" height="3.2" fill="#9a9a9a"/>
<rect x="979.2" y="313.3" width="1" height="3.2" fill="#9a9a9a"/>
<rect x="991.8" y="313.3" width="1" height="3.2" fill="#9a9a9a"/>
<rect x="1004.5" y="313.3" width="1" height="3.2" fill="#9a9a9a"/>
<rect x="1017.1" y="313.3" width="1" height="3.2" fill="#9a9a9a"/>
<rect x="1029.7" y="313.3" width="1" height="3.2" fill="#9a9a9a"/>
<rect x="1042.3" y="313.3" width="1" height="3.2" fill="#9a9a9a"/>
<rect x="1054.9" y="313.3" width="1" height="3.2" fill="#9a9a9a"/>
<rect x="1067.5" y="313.3" width="1" height="3.2" fill="#9a9a9a"/>
<rect x="1080.1" y="313.3" width="1" height="3.2" fill="#9a9a9a"/>
<rect x="1092.7" y="313.3" width="1" height="3.2" fill="#9a9a9a"/>
<rect x="1105.3" y="313.3" width="1" height="3.2" fill="#9a9a9a"/>
<rect x="1117.9" y="312.8" width="1" height="3.7" fill="#9a9a9a"/>
<path d="M989 301 L995 301 L995 308 L992 310.6 L989 308 Z" fill="#0078d7"/>
<rect x="849" y="324" width="163" height="22" fill="#f0fff0" />
<path d="M849.5 345.5 L849.5 324.5 L1011.5 324.5" fill="none" stroke="#a0a0a0"/>
<path d="M850.5 344.5 L850.5 325.5 L1010.5 325.5" fill="none" stroke="#696969"/>
<path d="M849.5 345.5 L1011.5 345.5 L1011.5 324.5" fill="none" stroke="#ffffff"/>
<circle cx="865.5" cy="334.8" r="5.6" fill="#ffffff" stroke="#333333" stroke-width="1"/>
<circle cx="865.5" cy="334.8" r="2.8" fill="#333333"/>
<text x="877.6" y="338.7" font-family="Liberation Sans" font-size="12" font-weight="bold" font-style="normal" fill="#6a0048" textLength="36.4" lengthAdjust="spacingAndGlyphs" >normal</text>
<circle cx="929.5" cy="334.8" r="5.6" fill="#ffffff" stroke="#333333" stroke-width="1"/>
<text x="941.8" y="338.7" font-family="Liberation Sans" font-size="12" font-weight="bold" font-style="normal" fill="#6a0048" textLength="17.6" lengthAdjust="spacingAndGlyphs" >x 2</text>
<circle cx="973.5" cy="334.8" r="5.6" fill="#ffffff" stroke="#333333" stroke-width="1"/>
<text x="985.7" y="338.7" font-family="Liberation Sans" font-size="12" font-weight="bold" font-style="normal" fill="#6a0048" textLength="17.3" lengthAdjust="spacingAndGlyphs" >x 5</text>
<text x="1034.5" y="338.7" font-family="Liberation Sans" font-size="12" font-weight="bold" font-style="normal" fill="#800080" textLength="71.5" lengthAdjust="spacingAndGlyphs" >Form opacity</text>
<rect x="1013" y="346" width="115" height="21" fill="#fdf8d2" />
<rect x="1019.5" y="352.5" width="101" height="3.5" fill="#e6e6e6" stroke="#d4d4d4" stroke-width="1"/>
<rect x="1023.2" y="362.8" width="1" height="3.7" fill="#9a9a9a"/>
<rect x="1041.9" y="363.3" width="1" height="3.2" fill="#9a9a9a"/>
<rect x="1060.7" y="363.3" width="1" height="3.2" fill="#9a9a9a"/>
<rect x="1079.4" y="363.3" width="1" height="3.2" fill="#9a9a9a"/>
<rect x="1098.2" y="363.3" width="1" height="3.2" fill="#9a9a9a"/>
<rect x="1116.9" y="362.8" width="1" height="3.7" fill="#9a9a9a"/>
<path d="M1113 348 L1121 348 L1121 357 L1117 360.6 L1113 357 Z" fill="#0078d7"/>
<text x="805.0" y="392.7" font-family="Liberation Sans" font-size="12" font-weight="normal" font-style="normal" fill="#000" textLength="93.3" lengthAdjust="spacingAndGlyphs" >RMS fit 0.2 ±0.7 km</text>
<rect x="797" y="402" width="327" height="395" fill="#ffffff" />
<path d="M797.5 796.5 L797.5 402.5 L1123.5 402.5" fill="none" stroke="#a0a0a0"/>
<path d="M798.5 795.5 L798.5 403.5 L1122.5 403.5" fill="none" stroke="#696969"/>
<path d="M797.5 796.5 L1123.5 796.5 L1123.5 402.5" fill="none" stroke="#ffffff"/>
<path d="M798.5 795.5 L1122.5 795.5 L1122.5 403.5" fill="none" stroke="#e3e3e3"/>
<rect x="799" y="780" width="324" height="16" fill="#f0f0f0" />
<rect x="816" y="780" width="205" height="15" fill="#a6a6a6" />
<path d="M808 784.5 L804 788 L808 791.5" stroke="#505050" stroke-width="2" fill="none"/>
<path d="M1113 784.5 L1117 788 L1113 791.5" stroke="#505050" stroke-width="2" fill="none"/>
<line x1="803.7" y1="410.8" x2="869.7" y2="410.8" stroke="#4b0082" stroke-width="2"/>
<line x1="803.7" y1="423.0" x2="869.7" y2="423.0" stroke="#ff0000" stroke-width="2"/>
<line x1="803.7" y1="434.6" x2="869.7" y2="434.6" stroke="#0000ff" stroke-width="2"/>
<line x1="803.7" y1="446.7" x2="869.7" y2="446.7" stroke="#8a2be2" stroke-width="2"/>
<line x1="803.7" y1="458.9" x2="869.7" y2="458.9" stroke="#a52a2a" stroke-width="2"/>
<circle cx="806" cy="475.6" r="1.3" fill="#ff69b4"/>
<circle cx="821" cy="475.6" r="1.3" fill="#ff69b4"/>
<circle cx="836" cy="475.6" r="1.3" fill="#ff69b4"/>
<circle cx="851" cy="475.6" r="1.3" fill="#ff69b4"/>
<circle cx="866" cy="475.6" r="1.3" fill="#ff69b4"/>
<clipPath id="lclip"><rect x="799" y="404" width="323" height="376"/></clipPath>
<g clip-path="url(#lclip)">
<text x="893.5" y="415.7" font-family="Liberation Mono" font-size="12.6" fill="#000" textLength="8.16" lengthAdjust="spacingAndGlyphs" style="white-space:pre">1</text>
<text x="934.5" y="415.7" font-family="Liberation Mono" font-size="12.6" fill="#000" textLength="212.16" lengthAdjust="spacingAndGlyphs" style="white-space:pre">J Rueff, near Cudlee Creek</text>
<text x="893.5" y="427.8" font-family="Liberation Mono" font-size="12.6" fill="#000" textLength="8.16" lengthAdjust="spacingAndGlyphs" style="white-space:pre">2</text>
<text x="934.5" y="427.8" font-family="Liberation Mono" font-size="12.6" fill="#000" textLength="252.96" lengthAdjust="spacingAndGlyphs" style="white-space:pre">P Martinaitis, near Broken Hill</text>
<text x="893.5" y="439.8" font-family="Liberation Mono" font-size="12.6" fill="#000" textLength="8.16" lengthAdjust="spacingAndGlyphs" style="white-space:pre">3</text>
<text x="934.5" y="439.8" font-family="Liberation Mono" font-size="12.6" fill="#000" textLength="195.84" lengthAdjust="spacingAndGlyphs" style="white-space:pre">D Gault, near Hawkesbury</text>
<text x="893.5" y="451.8" font-family="Liberation Mono" font-size="12.6" fill="#000" textLength="8.16" lengthAdjust="spacingAndGlyphs" style="white-space:pre">4</text>
<text x="934.5" y="451.8" font-family="Liberation Mono" font-size="12.6" fill="#000" textLength="204.00" lengthAdjust="spacingAndGlyphs" style="white-space:pre">A Wendelborn, near Undera</text>
<text x="893.5" y="463.9" font-family="Liberation Mono" font-size="12.6" fill="#000" textLength="32.64" lengthAdjust="spacingAndGlyphs" style="white-space:pre">5(M)</text>
<text x="934.5" y="463.9" font-family="Liberation Mono" font-size="12.6" fill="#000" textLength="187.68" lengthAdjust="spacingAndGlyphs" style="white-space:pre">H Pavlov, near St Clair</text>
<text x="893.5" y="480.2" font-family="Liberation Mono" font-size="12.6" fill="#000" textLength="32.64" lengthAdjust="spacingAndGlyphs" style="white-space:pre">6(P)</text>
<text x="934.5" y="480.2" font-family="Liberation Mono" font-size="12.6" fill="#000" textLength="73.44" lengthAdjust="spacingAndGlyphs" style="white-space:pre">Predicted</text>
</g>
</svg>
</body></html>
